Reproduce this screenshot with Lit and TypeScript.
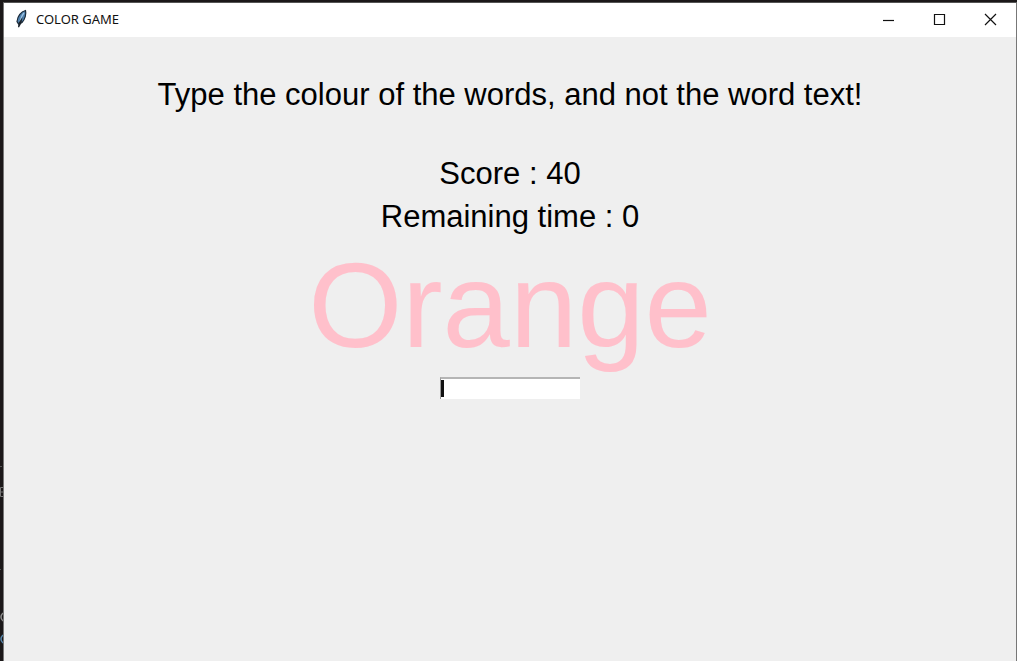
import { LitElement, html, css } from "lit";
import { customElement, property } from "lit/decorators.js";

@customElement("title-bar")
class TitleBar extends LitElement {
  @property() heading = "";

  static styles = css`
    :host {
      display: flex;
      align-items: center;
      box-sizing: border-box;
      height: 34px;
      padding-bottom: 2px;
      background: #fff;
      color: #111;
    }
    .feather {
      width: 12px;
      height: 20px;
      margin: 0 9px 0 11px;
    }
    .heading {
      flex: 1;
      margin: 0;
      font: 400 13px/16px "Noto Sans", sans-serif;
      white-space: nowrap;
    }
    .control {
      display: flex;
      align-items: center;
      justify-content: center;
      width: 51px;
      height: 32px;
      padding: 0;
      border: 0;
      background: none;
      color: #111;
    }
    .control svg {
      width: 13px;
      height: 13px;
      fill: none;
      stroke: currentColor;
    }
  `;

  render() {
    return html`
      <svg class="feather" viewBox="0 0 12 20" aria-hidden="true">
        <path d="M10.500 1.500C6 2.500 2.500 7 2 12.500L3.500 15L7 13.500C10 10.500 11.500 5 10.500 1.500Z" fill="#4f80ad" stroke="#1c2b3a" stroke-width="1.200" />
        <path d="M9 4C7 6 6 9 5 13" fill="none" stroke="#9cc3e2" stroke-width="1.200" />
        <path d="M7.500 8L6.500 14L4 18.500L3 18L3.500 14Z" fill="#1a222b" />
      </svg>
      <h1 class="heading">${this.heading}</h1>
      <button class="control" aria-label="Minimize">
        <svg viewBox="0 0 13 13"><path d="M1 7.500H12" stroke-width="1.200" /></svg>
      </button>
      <button class="control" aria-label="Maximize">
        <svg viewBox="0 0 13 13"><path d="M1.500 1.500H11.500V11.500H1.500Z" stroke-width="1.200" /></svg>
      </button>
      <button class="control" aria-label="Close">
        <svg viewBox="0 0 13 13"><path d="M1 1L12 12M12 1L1 12" stroke-width="1.200" /></svg>
      </button>
    `;
  }
}

@customElement("app-root")
class AppRoot extends LitElement {
  @property({ type: Number }) score = 40;
  @property({ type: Number }) remaining = 0;
  @property() word = "Orange";

  static styles = css`
    :host {
      display: flex;
      box-sizing: border-box;
      min-height: 100vh;
      padding-top: 2px;
      background: #1b1819;
    }
    .backdrop {
      flex: none;
      width: 3px;
      display: flex;
      flex-direction: column;
      justify-content: flex-end;
    }
    .marks {
      width: 3px;
      height: 200px;
    }
    .window {
      flex: 1;
      display: flex;
      flex-direction: column;
      min-width: 0;
      border: 1px solid #777;
      border-bottom: 0;
      border-top-color: #555;
      background: #efefef;
    }
    .game {
      display: flex;
      flex-direction: column;
      align-items: center;
      padding-top: 36px;
      font-family: "Liberation Sans", Arial, sans-serif;
      color: #000;
      text-align: center;
    }
    .line {
      margin: 0;
      font-size: 31px;
      line-height: 43px;
    }
    .instructions {
      margin-bottom: 36px;
    }
    .word {
      margin: 0;
      padding-bottom: 4px;
      font-size: 121px;
      line-height: 135px;
      color: #ffc0cb;
    }
    .answer {
      position: relative;
      display: flex;
    }
    .entry {
      box-sizing: border-box;
      width: 140px;
      height: 22px;
      padding: 0 4px;
      border: 0 solid #999;
      border-width: 2px 0 0 1px;
      border-top-color: #b5b5b5;
      border-radius: 0;
      outline: none;
      background: #fff;
      font: 14px "Liberation Sans", Arial, sans-serif;
      caret-color: transparent;
    }
    .caret {
      position: absolute;
      left: 1px;
      top: 3px;
      width: 3px;
      height: 17px;
      background: #111;
      pointer-events: none;
    }
  `;

  render() {
    return html`
      <div class="backdrop" aria-hidden="true">
        <svg class="marks" viewBox="0 0 3 200" fill="none">
          <path d="M0 5.500H2" stroke="#555" />
          <path d="M3 26.500H0.500V35.500H3M0.500 31H3" stroke="#777" />
          <path d="M0 108.500H1" stroke="#555" />
          <path d="M3 152Q-1 156 3 160" stroke="#8a8a8a" stroke-width="1.500" />
          <path d="M3 174Q-1 178 3 182" stroke="#5585aa" stroke-width="1.500" />
        </svg>
      </div>
      <div class="window">
        <title-bar heading="COLOR GAME"></title-bar>
        <main class="game">
          <p class="line instructions">Type the colour of the words, and not the word text!</p>
          <p class="line">Score : ${this.score}</p>
          <p class="line">Remaining time : ${this.remaining}</p>
          <p class="word">${this.word}</p>
          <div class="answer">
            <input class="entry" type="text" aria-label="Colour of the word" autocomplete="off" />
            <span class="caret"></span>
          </div>
        </main>
      </div>
    `;
  }
}
